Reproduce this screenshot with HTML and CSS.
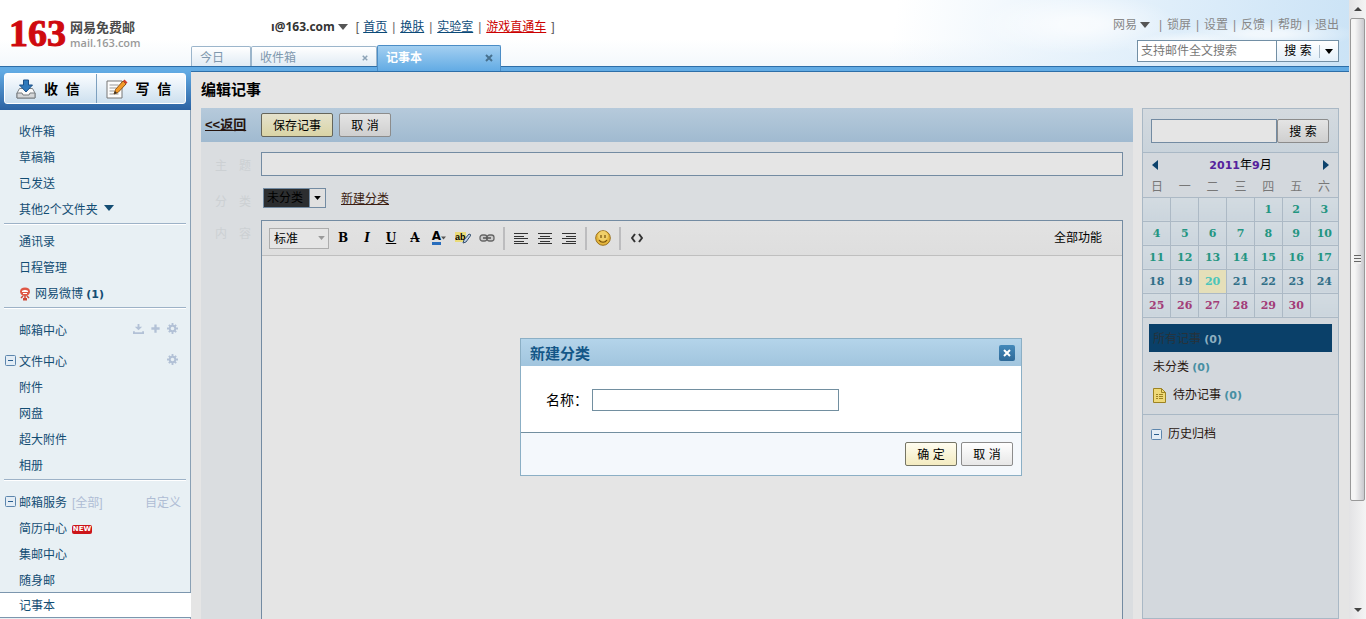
FILE: index.html
```html
<!DOCTYPE html>
<html lang="zh-CN">
<head>
<meta charset="utf-8">
<title>网易免费邮 - 记事本</title>
<link rel="stylesheet" href="styles.css">
</head>
<body>
<svg class="defs" aria-hidden="true">
  <symbol id="gear" viewBox="0 0 12 12"><circle cx="6" cy="6" r="3" fill="none" stroke="currentColor" stroke-width="2"/><path d="M6 0v3M6 9v3M0 6h3M9 6h3M2 2l2 2M8 8l2 2M10 2L8 4M2 10l2-2" stroke="currentColor" stroke-width="2" fill="none"/></symbol>
  <symbol id="caret" viewBox="0 0 10 6"><path d="M0 0h10L5 6z" fill="currentColor"/></symbol>
  <symbol id="cross" viewBox="0 0 8 8"><path d="M1 1l6 6M7 1L1 7" stroke="currentColor" stroke-width="2" fill="none"/></symbol>
  <symbol id="minus" viewBox="0 0 11 11"><rect x=".5" y=".5" width="10" height="10" rx="1" fill="#e3edf5" stroke="#5d86ad"/><path d="M3 5.500h5" stroke="#2b5f8f"/></symbol>
</svg>
<div class="screen">
<div class="app">
  <header class="header">
    <div class="logo"><b class="logo-num">163</b><div class="logo-text"><strong>网易免费邮</strong><span>mail.163.com</span></div></div>
    <div class="head-mid">
      <div class="account"><b>ı@163.com</b><svg class="caret"><use href="#caret"/></svg><span>[</span><a href="#">首页</a><i>|</i><a href="#">换肤</a><i>|</i><a href="#">实验室</a><i>|</i><a href="#" class="red">游戏直通车</a><span>]</span></div>
      <nav class="tabs">
        <a href="#" class="tab tab-today">今日</a>
        <a href="#" class="tab tab-inbox">收件箱<svg class="x-small"><use href="#cross"/></svg></a>
        <a href="#" class="tab tab-active">记事本<svg class="x"><use href="#cross"/></svg></a>
      </nav>
    </div>
    <div class="head-right">
      <nav class="top-links"><a href="#">网易</a><svg class="caret"><use href="#caret"/></svg><i class="first">|</i><a href="#">锁屏</a><i>|</i><a href="#">设置</a><i>|</i><a href="#">反馈</a><i>|</i><a href="#">帮助</a><i>|</i><a href="#">退出</a></nav>
      <form class="mail-search"><input type="text" placeholder="支持邮件全文搜索" aria-label="支持邮件全文搜索"><button type="button">搜 索</button><button type="button" class="more" aria-label="更多"><svg><use href="#caret"/></svg></button></form>
    </div>
  </header>
  <div class="strip"></div>
  <div class="body">
    <aside class="sidebar">
      <div class="compose">
        <div class="compose-group">
          <button type="button"><svg width="20" height="20" viewBox="0 0 20 20"><path d="M3.500 9.500L1 14v5h18v-5l-2.500-4.500z" fill="#fafafa" stroke="#7b8085"/><path d="M1 14h5l1 2h6l1-2h5v5H1z" fill="#d4d6d8" stroke="#777c80"/><path d="M7.500 1h5v5h4L10 13 3.500 6h4z" fill="#2f79bb" stroke="#1b4f86"/></svg>收&nbsp; 信</button>
          <button type="button"><svg width="22" height="20" viewBox="0 0 22 20"><path d="M1 2h15v17H1z" fill="#fcfcfc" stroke="#777"/><path d="M3.500 6h9M3.500 9h7M3.500 12h5M3.500 15h9" stroke="#999"/><path d="M8 15l1.500-4.500L17 2l3 3-8 8.500z" fill="#f29a28" stroke="#8d5314"/><path d="M17 2l1.500-1.500 3 3L20 5z" fill="#d03e2b"/><path d="M8 15l1-3 2 2z" fill="#333"/></svg>写&nbsp; 信</button>
        </div>
      </div>
      <ul class="menu">
        <li><a href="#">收件箱</a></li>
        <li><a href="#">草稿箱</a></li>
        <li><a href="#">已发送</a></li>
        <li><a href="#">其他2个文件夹</a><svg class="caret"><use href="#caret"/></svg></li>
      </ul>
      <ul class="menu tight">
        <li><a href="#">通讯录</a></li>
        <li><a href="#">日程管理</a></li>
        <li><svg class="weibo" viewBox="0 0 12 14"><path d="M6 .500C3 .500 1 2 1 4.500S3 9 6 9s5-2 5-4.500S9 .500 6 .500z" fill="#df5745"/><path d="M3 4.500c1-1.500 5-1.500 6 0zM4 6.500h4" stroke="#fff" fill="none"/><path d="M4 9l-2 2M8 9l2 2M6 9v3" stroke="#cf4636" stroke-width="1.500" fill="none"/><path d="M4 11h4v2.500H4z" fill="#cf4636"/></svg><a href="#">网易微博 <b>(1)</b></a></li>
      </ul>
      <ul class="menu loose">
        <li class="center"><a href="#">邮箱中心</a><span class="tools"><svg viewBox="0 0 12 12"><path d="M6 1v5M1 9v2h10V9" stroke="currentColor" stroke-width="2" fill="none"/><path d="M2 4h8L6 8z" fill="currentColor"/></svg><svg viewBox="0 0 12 12"><path d="M6 1.500v9M1.500 6h9" stroke="currentColor" stroke-width="2.500"/></svg><svg><use href="#gear"/></svg></span></li>
        <li><svg class="fold"><use href="#minus"/></svg><a href="#">文件中心</a><span class="tools"><svg><use href="#gear"/></svg></span></li>
        <li><a href="#">附件</a></li>
        <li><a href="#">网盘</a></li>
        <li><a href="#">超大附件</a></li>
        <li><a href="#">相册</a></li>
      </ul>
      <ul class="menu loose">
        <li><svg class="fold"><use href="#minus"/></svg><a href="#">邮箱服务</a><a href="#" class="pale">[全部]</a><a href="#" class="pale custom">自定义</a></li>
        <li><a href="#">简历中心</a><span class="new">NEW</span></li>
        <li><a href="#">集邮中心</a></li>
        <li><a href="#">随身邮</a></li>
        <li class="active"><a href="#">记事本</a></li>
      </ul>
    </aside>
    <main class="main">
      <h1>编辑记事</h1>
      <div class="columns">
        <section class="note">
          <div class="actions"><a href="#">&lt;&lt;返回</a><button type="button" class="btn primary">保存记事</button><button type="button" class="btn">取 消</button></div>
          <form class="fields">
            <label for="subject">主　题</label><input id="subject" type="text">
            <label for="category">分　类</label>
            <div class="category"><span class="dark-select"><select id="category"><option>未分类</option></select><svg><use href="#caret"/></svg></span><a href="#">新建分类</a></div>
            <label for="content">内　容</label>
            <div class="editor">
              <div class="toolbar">
                <span class="format"><select aria-label="格式"><option>标准</option></select><svg><use href="#caret"/></svg></span>
                <button type="button"><b>B</b></button><button type="button"><b><em>I</em></b></button><button type="button"><b><u>U</u></b></button><button type="button"><b><s>A</s></b></button>
                <button type="button" aria-label="文字颜色"><span class="color-a">A</span><svg class="mini"><use href="#caret"/></svg></button>
                <button type="button" aria-label="背景色"><svg width="16" height="14" viewBox="0 0 16 14"><path d="M0 1h11v10H0z" fill="#eadb78"/><text x="0" y="9" class="ab">ab</text><path d="M8 12l1-3 5-6 2 1-5 7z" fill="#bfd0e8" stroke="#34506f"/></svg></button>
                <button type="button" aria-label="链接"><svg width="16" height="10" viewBox="0 0 16 10"><rect x="1" y="2" width="7" height="6" rx="2.500" fill="#ccc" stroke="#666" stroke-width="1.300"/><rect x="8" y="2" width="7" height="6" rx="2.500" fill="#ccc" stroke="#666" stroke-width="1.300"/><path d="M4 5h8" stroke="#555" stroke-width="1.500"/></svg></button>
                <i></i>
                <button type="button" aria-label="左对齐"><svg width="14" height="13"><path d="M0 1.500h14M0 4.500h10M0 6.500h14M0 9.500h10M0 11.500h14" stroke="#333"/></svg></button>
                <button type="button" aria-label="居中"><svg width="14" height="13"><path d="M0 1.500h14M2 4.500h10M0 6.500h14M2 9.500h10M0 11.500h14" stroke="#333"/></svg></button>
                <button type="button" aria-label="右对齐"><svg width="14" height="13"><path d="M0 1.500h14M4 4.500h10M0 6.500h14M4 9.500h10M0 11.500h14" stroke="#333"/></svg></button>
                <i></i>
                <button type="button" aria-label="表情"><svg width="16" height="16" viewBox="0 0 16 16"><circle cx="8" cy="8" r="7.300" fill="#e5b63d" stroke="#99701b"/><circle cx="8" cy="6" r="5" fill="#f0cf69"/><path d="M6 5v3M10 5v3M4 10c2 3 6 3 8 0" stroke="#74500d" fill="none" stroke-width="1.200"/></svg></button>
                <i></i>
                <button type="button" aria-label="源代码"><svg width="12" height="10" viewBox="0 0 12 10"><path d="M4 1L1 5l3 4M8 1l3 4-3 4" stroke="#333" stroke-width="2" fill="none"/></svg></button>
                <button type="button" class="all">全部功能</button>
              </div>
              <textarea id="content"></textarea>
            </div>
          </form>
        </section>
        <aside class="panel">
          <form class="panel-search"><input type="text" aria-label="搜索记事"><button type="button" class="btn">搜 索</button></form>
          <div class="month"><button type="button" aria-label="上个月"><svg viewBox="0 0 6 10"><path d="M6 0v10L0 5z" fill="#0c426c"/></svg></button><span><b>2011</b>年<b>9</b>月</span><button type="button" aria-label="下个月"><svg viewBox="0 0 6 10"><path d="M0 0v10l6-5z" fill="#0c426c"/></svg></button></div>
          <table class="calendar">
            <thead><tr><th>日</th><th>一</th><th>二</th><th>三</th><th>四</th><th>五</th><th>六</th></tr></thead>
            <tbody>
              <tr><td></td><td></td><td></td><td></td><td>1</td><td>2</td><td>3</td></tr>
              <tr><td>4</td><td>5</td><td>6</td><td>7</td><td>8</td><td>9</td><td>10</td></tr>
              <tr><td>11</td><td>12</td><td>13</td><td>14</td><td>15</td><td>16</td><td>17</td></tr>
              <tr class="teal"><td>18</td><td>19</td><td class="today">20</td><td>21</td><td>22</td><td>23</td><td>24</td></tr>
              <tr class="plum"><td>25</td><td>26</td><td>27</td><td>28</td><td>29</td><td>30</td><td></td></tr>
            </tbody>
          </table>
          <ul class="groups">
            <li class="selected"><a href="#">所有记事 <b>(0)</b></a></li>
            <li><a href="#">未分类 <b>(0)</b></a></li>
            <li><svg width="13" height="15" viewBox="0 0 13 15"><path d="M.5.500h8l4 4v10H.5z" fill="#efd978" stroke="#9d8322"/><path d="M8.500.500v4h4M3 6.500h2M6 6.500h4M3 8.500h2M6 8.500h4M3 10.500h2M6 10.500h4" stroke="#9d8322" fill="none"/></svg><a href="#">待办记事 <b>(0)</b></a></li>
          </ul>
          <div class="history"><svg><use href="#minus"/></svg><a href="#">历史归档</a></div>
        </aside>
      </div>
      <section class="dialog" role="dialog" aria-labelledby="dialog-title">
        <header><h2 id="dialog-title">新建分类</h2><button type="button" aria-label="关闭"><svg><use href="#cross"/></svg></button></header>
        <div class="dialog-body"><label for="name">名称：</label><input id="name" type="text"></div>
        <footer><button type="button" class="btn primary">确 定</button><button type="button" class="btn">取 消</button></footer>
      </section>
    </main>
  </div>
</div>
<div class="scrollbar" aria-hidden="true"><svg viewBox="0 0 8 4"><path d="M0 4h8L4 0z" fill="#444"/></svg><div class="thumb"><span></span></div><svg viewBox="0 0 8 4"><path d="M0 0h8L4 4z" fill="#444"/></svg></div>
</div>
</body>
</html>
```
FILE: styles.css
```css
* { box-sizing: border-box; }
body { margin: 0; font: 12px/16px "Liberation Sans", "Noto Sans CJK SC", sans-serif; color: #000; }
button, input, select, textarea { font: inherit; color: inherit; margin: 0; padding: 0; border: 0; border-radius: 0; background: none; outline: 0; }
select { appearance: none; }
textarea { resize: none; display: block; }
ul { list-style: none; margin: 0; padding: 0; }
a { color: inherit; text-decoration: none; }
i { font-style: normal; }
svg { flex: none; display: block; }
.defs { position: absolute; width: 0; height: 0; }
.caret { width: 10px; height: 6px; }

.screen { display: flex; height: 100vh; overflow: hidden; }
.app { flex: 1; min-width: 0; display: flex; flex-direction: column; }

.header { position: relative; z-index: 1; display: flex; height: 66px; background: radial-gradient(ellipse 60px 16px at 88% 48px, #fff 20%, #fff0), radial-gradient(ellipse 90px 14px at 94% 34px, #fffa 20%, #fff0), radial-gradient(ellipse 100px 30px at 80% 24px, #fffa 20%, #fff0), linear-gradient(100deg, #fff0 66%, #dfeefa 86%, #cbe3f6 100%), linear-gradient(#fff 60%, #f3f8fc); }
.logo { display: flex; width: 191px; padding: 16px 0 0 9px; gap: 4px; }
.logo-num { font: bold 38px/34px "Liberation Serif", serif; color: #cf0a0f; -webkit-text-stroke: 1px #cf0a0f; }
.logo-text { display: flex; flex-direction: column; padding-top: 4px; line-height: 15px; }
.logo-text strong { font-size: 13px; color: #4b4b4b; }
.logo-text span { font: 600 11px/15px "Open Sans", sans-serif; color: #999; }
.head-mid { flex: 1; display: flex; flex-direction: column; justify-content: space-between; }
.account { display: flex; align-items: center; gap: 5px; padding: 19px 0 0 80px; color: #555; }
.account b { font: bold 12px/16px "Open Sans", sans-serif; color: #333; }
.account .caret { margin: 0 3px 0 -2px; color: #555; }
.account span + a { margin-left: -1px; }
.account i { width: 3px; text-align: center; color: #666; }
.account a { color: #0b4a78; text-decoration: underline; }
.account .red { color: #c00; }
.tabs { display: flex; align-items: flex-end; }
.tab { display: flex; align-items: center; justify-content: space-between; height: 20px; padding: 3px 8px 0; color: #7f98ae; border: 1px solid #9bb5cb; border-bottom: 0; background: linear-gradient(#fff, #e0ebf4); border-radius: 2px 2px 0 0; }
.tab-today { width: 60px; }
.tab-inbox { width: 126px; }
.tab .x-small { width: 6px; height: 6px; color: #8ba2b6; }
.tab-active { width: 124px; height: 26px; margin-bottom: -5px; padding: 0 7px 1px 8px; color: #fff; font-weight: bold; border-color: #4b8dc6; background: linear-gradient(#a3cff1, #62abe4); }
.tab .x { width: 8px; height: 8px; color: #47718f; }
.head-right { display: flex; flex-direction: column; align-items: flex-end; padding: 17px 10px 0 0; gap: 7px; }
.top-links { display: flex; align-items: center; color: #888; gap: 5px; }
.top-links i { width: 3px; text-align: center; }
.top-links .first { margin-left: 4px; }
.top-links .caret { margin-left: -2px; color: #555; }
.mail-search { display: flex; height: 22px; border: 1px solid #728fa5; background: #fff; }
.mail-search input { width: 139px; padding: 0 3px; border-right: 1px solid #728fa5; }
.mail-search input::placeholder { color: #777; }
.mail-search button { width: 42px; background: linear-gradient(#fff, #e4f0fa); }
.mail-search .more { width: 19px; display: grid; place-items: center; }
.more svg { width: 19px; height: 13px; padding: 4px 5px; border-left: 1px solid #a9bac9; }
.strip { height: 6px; background: #62abe4; border: solid #2d6ea8; border-width: 1px 0; }

.body { flex: 1; min-height: 0; display: flex; }
.sidebar { width: 191px; flex: none; background: #e8f0f4; border-right: 1px solid #8aa0b4; color: #134d73; }
.compose { position: relative; height: 39px; margin: -1px -1px 8px 0; padding: 2px 5px 2px 4px; background: linear-gradient(#62abe4, #2b62a2); }
.compose-group { display: flex; height: 31px; border: 1px solid #fff; border-radius: 3px; background: linear-gradient(#fbfdff, #cde0ef); }
.compose button { flex: 1; display: flex; align-items: center; padding-left: 11px; gap: 8px; font-size: 14px; font-weight: bold; color: #000; }
.compose button + button { padding-left: 9px; border-left: 1px solid #7da0bf; }
.menu li { display: flex; align-items: center; height: 26px; padding: 2px 9px 0 19px; }
.menu .caret { margin: -4px 0 0 6px; }
.menu + .menu::before { content: ""; display: block; height: 2px; margin: 1px 4px 3px; background: linear-gradient(#9db2c7 50%, #fff 50%); }
.menu.loose::before { margin-bottom: 8px; }
.menu .center { margin-bottom: 5px; }
.menu .weibo { width: 12px; height: 14px; margin-right: 4px; }
.menu b { font-family: "DejaVu Sans", sans-serif; font-size: 11px; }
.menu .fold { width: 11px; height: 11px; margin: -4px 3px 0 -14px; }
.tools { display: flex; gap: 6px; margin: -5px 3px 0 auto; color: #b2c1d6; }
.tools svg { width: 11px; height: 11px; }
.pale { color: #afbdd4; margin-left: 5px; }
.custom { margin-left: auto; }
.new { margin-left: 5px; width: 20px; height: 9px; border-radius: 2px; background: #cc1519; color: #fff; text-align: center; font: bold 7px/9px "DejaVu Sans", sans-serif; }
.menu .active { height: 26px; margin: -1px -1px 0 0; background: #fff; border: solid #7c96ae; border-width: 1px 0; }

.main { position: relative; flex: 1; min-width: 0; display: flex; flex-direction: column; padding: 8px 10px 0; background: #e5e5e5; }
h1 { margin: 0 0 8px; font-size: 15px; line-height: 20px; }
.columns { flex: 1; min-height: 0; display: flex; gap: 9px; }
.note { flex: 1; min-width: 0; display: flex; flex-direction: column; background: #dadde0; }
.actions { display: flex; align-items: center; height: 34px; padding-left: 4px; background: linear-gradient(#b6cadb, #a0bad0); }
.actions a { width: 56px; font-weight: bold; font-size: 13px; color: #26140e; text-decoration: underline; }
.btn { width: 52px; height: 24px; padding-top: 1px; border: 1px solid #8c8c8c; border-radius: 2px; background: linear-gradient(#e4e4e4, #cfcfcf); }
.actions .btn + .btn { margin-left: 6px; }
.actions .primary { width: 72px; border-color: #65655a; background: linear-gradient(#e5e2cd, #dad4a5); }
.fields { flex: 1; min-height: 0; display: grid; grid-template-columns: 46px 1fr; grid-template-rows: 24px 20px 1fr; row-gap: 12px; padding: 10px 10px 0 14px; }
.fields label { color: #ccd0d3; padding-top: 6px; }
.fields > input { border: 1px solid #738ba2; background: #e5e5e5; }
.category { display: flex; align-items: center; gap: 15px; padding-left: 2px; color: #3a1c10; }
.category > a { padding-top: 2px; text-decoration: underline; }
.dark-select { display: flex; width: 63px; height: 20px; border: 1px solid #738ba2; background: #e0e0e0; color: #000; }
.dark-select select { width: 46px; padding-left: 3px; background: #2c2e30; border: 1px solid #738ba2; border-width: 0 1px 0 0; }
.dark-select svg { width: 15px; height: 18px; padding: 7px 4px; }
.editor { display: flex; flex-direction: column; border: 1px solid #738ba2; border-bottom: 0; background: #e5e5e5; }
.toolbar { display: flex; align-items: center; height: 35px; padding: 0 20px 0 7px; border-bottom: 1px solid #bfbfbf; background: linear-gradient(#e2e2e2, #dedede); }
.format { display: flex; align-items: center; width: 60px; height: 21px; margin-right: 2px; border: 1px solid #adadad; background: #e5e5e5; }
.format select { width: 48px; height: 19px; padding: 1px 0 0 4px; }
.format svg { width: 7px; height: 4px; color: #999; }
.toolbar button { display: flex; align-items: center; justify-content: center; width: 24px; height: 24px; }
.toolbar b { font: bold 12px/14px "DejaVu Serif", serif; }
.toolbar b em { font-style: italic; }
.color-a { font: bold 12px/11px "DejaVu Sans", sans-serif; border-bottom: 3px solid #286dbd; }
.mini { width: 5px; height: 4px; color: #555; }
.ab { font: bold 9px "Liberation Sans", sans-serif; }
.toolbar i { width: 2px; height: 23px; margin: 0 4px; background: #bcbcbe; }
.toolbar .all { width: auto; margin-left: auto; }
.editor textarea { flex: 1; width: 100%; }

.panel { width: 197px; flex: none; border: 1px solid #a9b8c5; background: #d3d8dd; }
.panel-search { display: flex; height: 44px; padding: 10px 9px 10px 8px; border-bottom: 1px solid #a9b8c5; background: linear-gradient(#d4dadf, #c9d3db); }
.panel-search input { flex: 1; min-width: 0; height: 24px; border: 1px solid #738ba2; background: #e5e5e5; }
.month { display: flex; align-items: center; justify-content: space-between; height: 23px; padding: 1px 9px 0; }
.month button svg { width: 6px; height: 10px; }
.month b { font: bold 11px/16px "DejaVu Sans", sans-serif; color: #55219c; }
.calendar { width: 100%; border-collapse: collapse; table-layout: fixed; }
.calendar th { height: 21px; padding: 1px 0 0; font-weight: normal; color: #777; }
.calendar td { height: 24px; padding: 1px 0 0; border: 1px solid #acb9c5; text-align: center; background: linear-gradient(#d3dbe1, #cbd5dd); font: bold 11px/16px "DejaVu Serif", serif; color: #239581; }
.calendar td:first-child { border-left: 0; }
.calendar td:last-child { border-right: 0; }
.calendar .teal td { color: #316f88; }
.calendar .plum td { color: #a23b77; }
.calendar .teal .today { background: #e5dfb9; color: #4cc5bb; }
.groups { padding: 6px; border-bottom: 1px solid #a9b8c5; }
.groups li { display: flex; align-items: center; gap: 7px; height: 28px; padding: 3px 4px 0; color: #2a1711; }
.groups b { font: bold 11px/16px "DejaVu Sans", sans-serif; color: #478fa3; }
.groups .selected { background: #0a4069; color: #27323a; }
.groups .selected b { color: #8eafc0; }
.history { display: flex; align-items: center; gap: 6px; height: 38px; padding: 1px 0 0 8px; color: #2a1711; }
.history svg { width: 11px; height: 11px; }

.dialog { position: absolute; top: 266px; left: 50%; width: 502px; margin-left: -250px; border: 1px solid #8bafc5; background: #fff; }
.dialog header { display: flex; align-items: center; justify-content: space-between; height: 27px; padding: 0 6px 0 9px; background: linear-gradient(#b4d4ea, #a1c5de); }
.dialog h2 { margin: 2px 0 0; font-size: 15px; line-height: 20px; color: #145788; }
.dialog header button { display: grid; place-items: center; width: 16px; height: 16px; border-radius: 2px; background: linear-gradient(#4388b9, #2e6998); color: #fff; }
.dialog header svg { width: 8px; height: 8px; }
.dialog-body { display: flex; align-items: center; height: 66px; padding: 2px 25px 0; font-size: 14px; }
.dialog-body label { width: 46px; white-space: nowrap; }
.dialog-body input { width: 247px; height: 22px; border: 1px solid #728fa0; }
.dialog footer { display: flex; justify-content: flex-end; gap: 4px; height: 43px; padding: 9px 8px; border-top: 1px solid #728fa0; background: #f4f8fc; }
.dialog .btn { background: linear-gradient(#fff, #e7e7e7); }
.dialog .primary { border-color: #757565; background: linear-gradient(#fffdf0, #f3ebc0); }

.scrollbar { width: 17px; flex: none; display: flex; flex-direction: column; align-items: center; background: linear-gradient(90deg, #e3e3e5, #f4f4f4); }
.scrollbar svg { width: 8px; height: 4px; margin: 7px 0; }
.thumb { width: 15px; height: 78%; margin-bottom: auto; display: grid; place-items: center; border: 1px solid #999; border-radius: 2px; background: linear-gradient(90deg, #f5f5f5 30%, #c9c9ce); }
.thumb span { width: 7px; height: 9px; background: repeating-linear-gradient(#666 0 1px, #eee 1px 3px); }
```
